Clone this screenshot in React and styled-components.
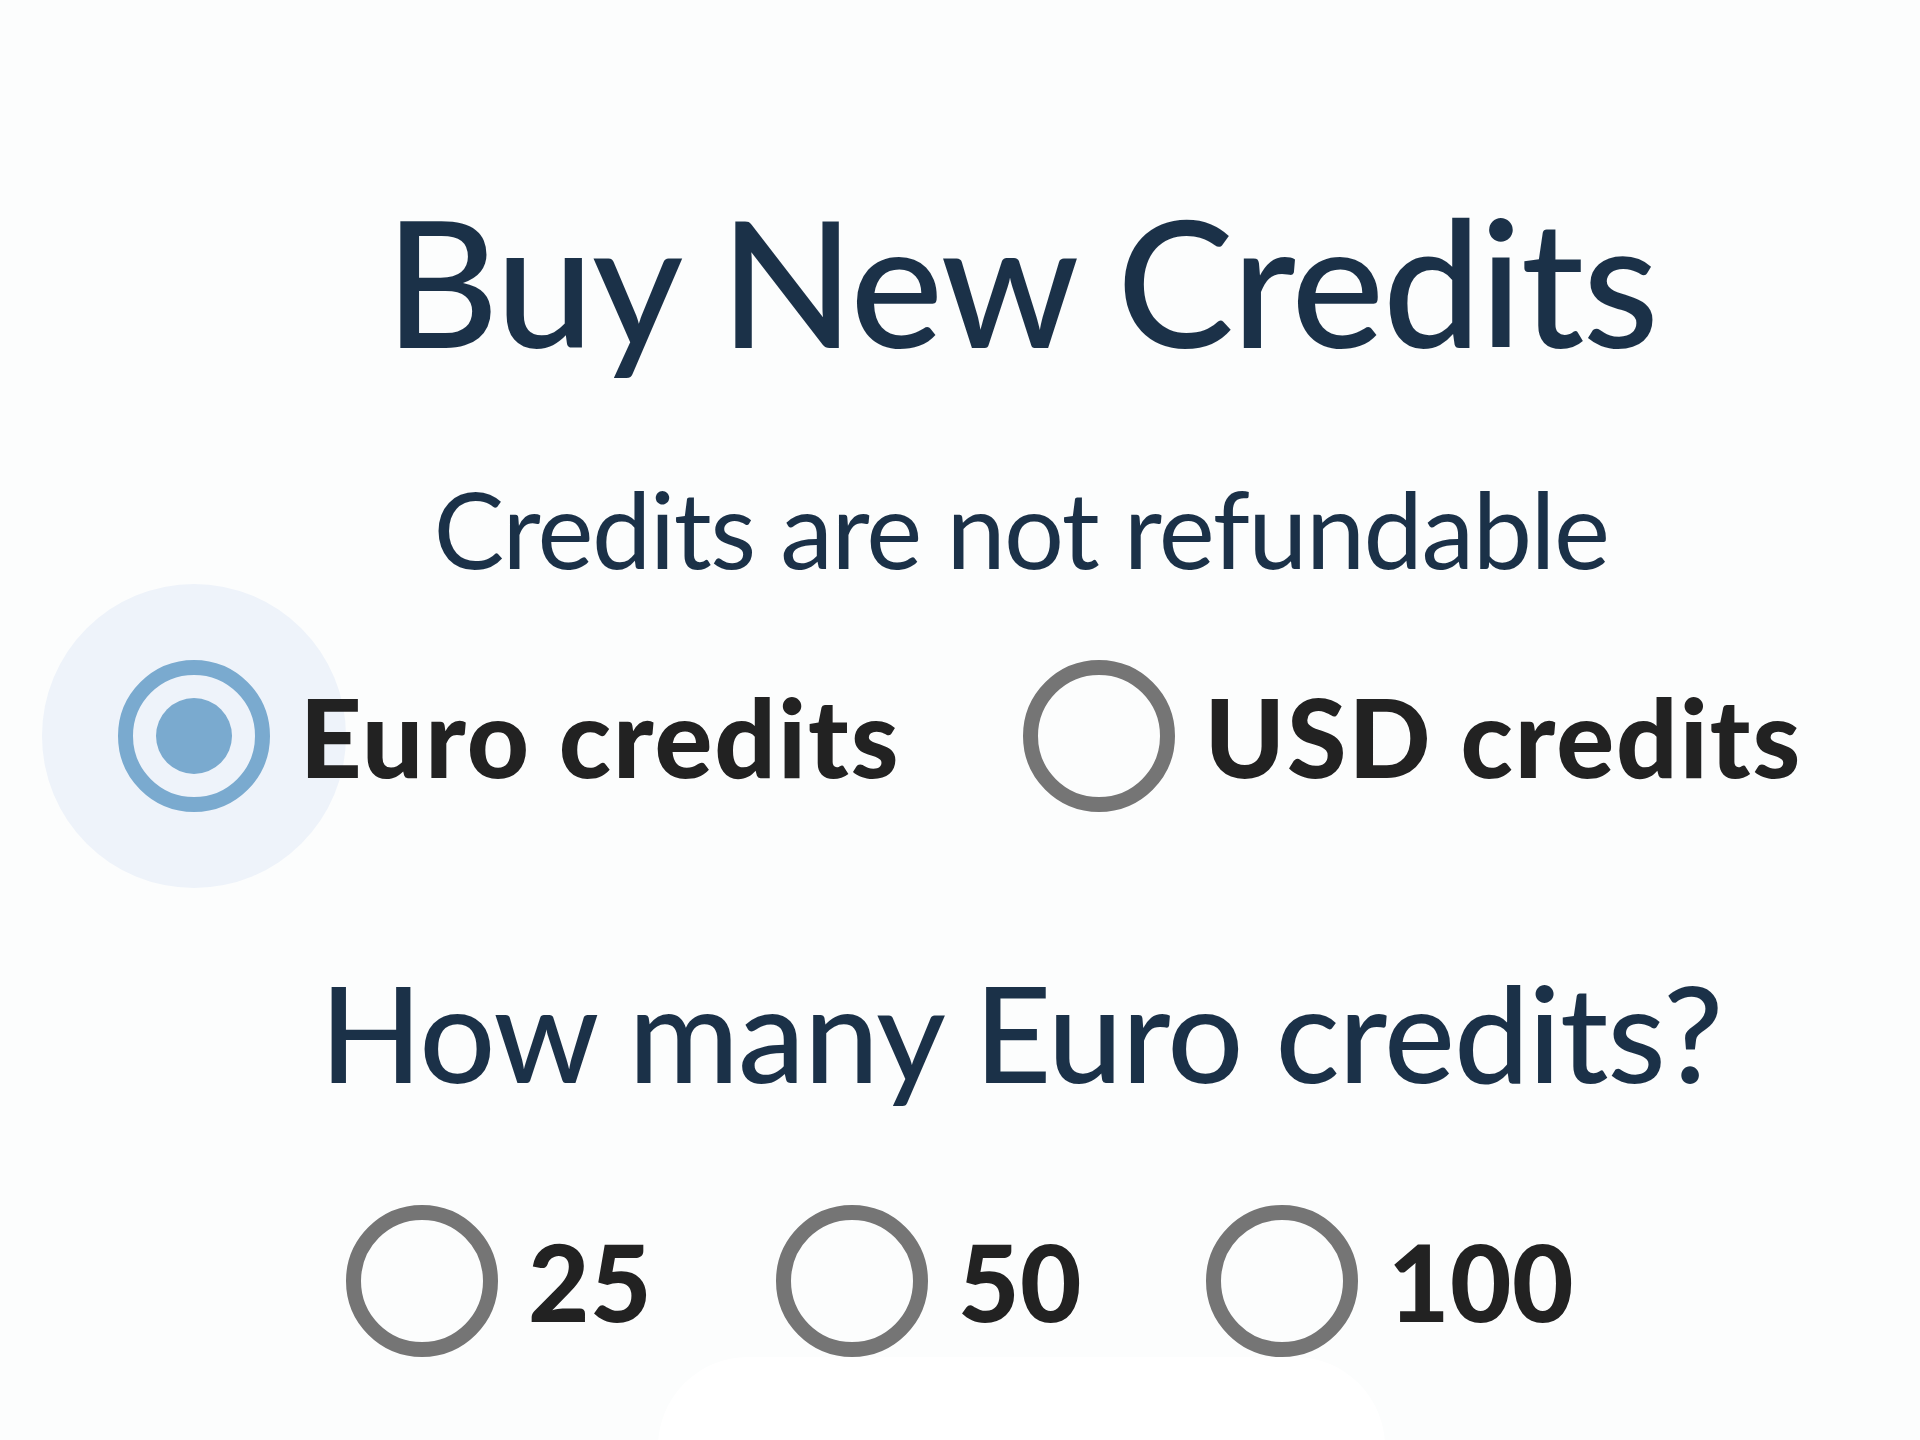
import React, { useState } from "react";
import styled, { createGlobalStyle } from "styled-components";

const GlobalStyle = createGlobalStyle`
	html {
		background: #fcfdfd;
	}
	body {
		margin: 0;
		padding: 0;
		font-family: "Lato", "Noto Sans", sans-serif;
	}
`;

const currencies = [
	{ id: "eur", label: "Euro credits", name: "Euro" },
	{ id: "usd", label: "USD credits", name: "USD" },
];

const amounts = [25, 50, 100];

const App = () => {
	const [currency, setCurrency] = useState("eur");
	const [amount, setAmount] = useState(null);
	const selected = currencies.find((c) => c.id === currency);

	return (
		<Page>
			<GlobalStyle />
			<Heading>
				<Title>Buy New Credits</Title>
				<Subtitle>Credits are not refundable</Subtitle>
			</Heading>

			<CurrencyGroup role="radiogroup">
				{currencies.map((c) => (
					<Option key={c.id} onClick={() => setCurrency(c.id)}>
						<Radio $checked={currency === c.id} $focused={currency === c.id} />
						<OptionLabel $wide>{c.label}</OptionLabel>
					</Option>
				))}
			</CurrencyGroup>

			<Heading>
				<Question>How many {selected.name} credits?</Question>
			</Heading>

			<AmountGroup role="radiogroup">
				{amounts.map((a) => (
					<Option key={a} onClick={() => setAmount(a)}>
						<Radio $checked={amount === a} />
						<OptionLabel>{a}</OptionLabel>
					</Option>
				))}
			</AmountGroup>

			<BottomCard />
		</Page>
	);
};
export default App;

const Page = styled.main`
	width: 1920px;
	height: 1440px;
	overflow: hidden;
	display: flex;
	flex-direction: column;
	align-items: center;
	padding-top: 192px;
	box-sizing: border-box;
`;

const Heading = styled.header`
	width: 100%;
	box-sizing: border-box;
	padding-left: 122px;
	display: flex;
	flex-direction: column;
	align-items: center;
	color: #1b3148;
`;

const Title = styled.h1`
	margin: 0;
	font-size: 176px;
	line-height: 1;
	font-weight: 500;
	letter-spacing: -1.8px;
	white-space: nowrap;
`;

const Subtitle = styled.p`
	margin: 107px 0 0;
	font-size: 106px;
	line-height: 1;
	font-weight: 400;
	letter-spacing: -1.5px;
	white-space: nowrap;
`;

const CurrencyGroup = styled.div`
	display: flex;
	align-items: center;
	gap: 122px;
	margin-top: 79px;
	margin-bottom: 153px;
`;

const AmountGroup = styled.div`
	display: flex;
	align-items: center;
	gap: 124px;
	margin-top: 106px;
`;

const Option = styled.label`
	display: flex;
	align-items: center;
	gap: 30px;
	cursor: pointer;
	isolation: isolate;
`;

const Radio = styled.span`
	position: relative;
	flex: none;
	width: 152px;
	height: 152px;
	box-sizing: border-box;
	border-radius: 50%;
	border: 15px solid ${(p) => (p.$checked ? "#7aaacf" : "#757575")};
	display: flex;
	align-items: center;
	justify-content: center;

	&::before {
		content: "";
		display: ${(p) => (p.$focused ? "block" : "none")};
		position: absolute;
		left: 50%;
		top: 50%;
		width: 304px;
		height: 304px;
		border-radius: 50%;
		background: #eef3fa;
		transform: translate(-50%, -50%);
		z-index: -1;
	}

	&::after {
		content: "";
		display: ${(p) => (p.$checked ? "block" : "none")};
		width: 76px;
		height: 76px;
		border-radius: 50%;
		background: #7aaacf;
	}
`;

const OptionLabel = styled.span`
	font-size: ${(p) => (p.$wide ? "108px" : "106px")};
	line-height: 1;
	font-weight: 900;
	letter-spacing: ${(p) => (p.$wide ? "2px" : "0.5px")};
	color: #222222;
	white-space: nowrap;
`;

const Question = styled.h2`
	margin: 0;
	font-size: 134px;
	line-height: 1;
	font-weight: 500;
	letter-spacing: -1px;
	white-space: nowrap;
`;

const BottomCard = styled.div`
	flex: none;
	width: 727px;
	height: 200px;
	margin-left: 122px;
	border-radius: 90px 90px 0 0;
	background: #ffffff;
`;
